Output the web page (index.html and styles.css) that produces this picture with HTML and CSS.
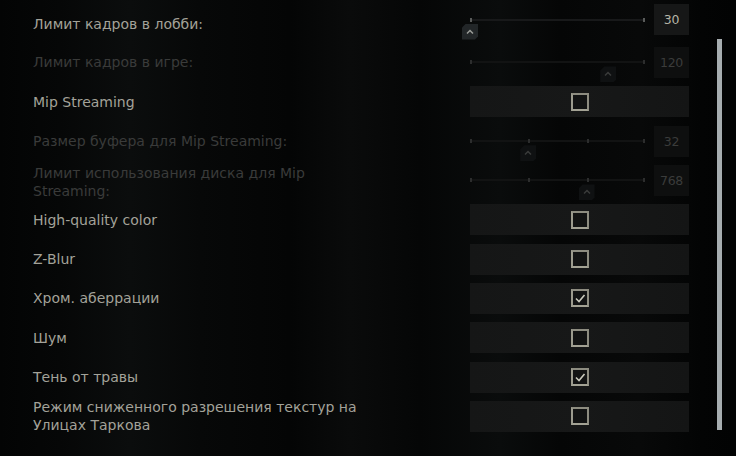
FILE: index.html
```html
<!DOCTYPE html>
<html lang="ru">
<head>
<meta charset="utf-8">
<link rel="stylesheet" href="styles.css">
</head>
<body>
<div class="screen">
  <div class="list">
    <div class="row first">
      <div class="label">Лимит кадров в лобби:</div>
      <div class="control slider-ctl">
        <div class="track">
          <span class="cap l"></span><span class="cap r"></span>
          <span class="handle" style="left:0%"><svg width="16" height="16" viewBox="0 0 16 16"><polyline points="5,9.5 8,6.5 11,9.5" fill="none" stroke="#9a9c98" stroke-width="1.5"/></svg></span>
        </div>
        <div class="value">30</div>
      </div>
    </div>
    <div class="row dim">
      <div class="label">Лимит кадров в игре:</div>
      <div class="control slider-ctl">
        <div class="track">
          <span class="cap l"></span><span class="cap r"></span>
          <span class="handle" style="left:79%"><svg width="16" height="16" viewBox="0 0 16 16"><polyline points="5,9.5 8,6.5 11,9.5" fill="none" stroke="#3a3c3b" stroke-width="1.5"/></svg></span>
        </div>
        <div class="value">120</div>
      </div>
    </div>
    <div class="row">
      <div class="label">Mip Streaming</div>
      <div class="control check-ctl"><span class="box"></span></div>
    </div>
    <div class="row dim">
      <div class="label">Размер буфера для Mip Streaming:</div>
      <div class="control slider-ctl">
        <div class="track">
          <span class="cap l"></span><span class="cap t1"></span><span class="cap t2"></span><span class="cap r"></span>
          <span class="handle" style="left:33.3%"><svg width="16" height="16" viewBox="0 0 16 16"><polyline points="5,9.5 8,6.5 11,9.5" fill="none" stroke="#3a3c3b" stroke-width="1.5"/></svg></span>
        </div>
        <div class="value">32</div>
      </div>
    </div>
    <div class="row dim two">
      <div class="label">Лимит использования диска для Mip Streaming:</div>
      <div class="control slider-ctl">
        <div class="track">
          <span class="cap l"></span><span class="cap t1"></span><span class="cap t2"></span><span class="cap r"></span>
          <span class="handle" style="left:66.6%"><svg width="16" height="16" viewBox="0 0 16 16"><polyline points="5,9.5 8,6.5 11,9.5" fill="none" stroke="#3a3c3b" stroke-width="1.5"/></svg></span>
        </div>
        <div class="value">768</div>
      </div>
    </div>
    <div class="row">
      <div class="label">High-quality color</div>
      <div class="control check-ctl"><span class="box"></span></div>
    </div>
    <div class="row">
      <div class="label">Z-Blur</div>
      <div class="control check-ctl"><span class="box"></span></div>
    </div>
    <div class="row">
      <div class="label">Хром. аберрации</div>
      <div class="control check-ctl"><span class="box"><svg width="14" height="14" viewBox="0 0 14 14"><polyline points="3,7.5 6,10.5 11.5,4" fill="none" stroke="#c9c9bc" stroke-width="1.6"/></svg></span></div>
    </div>
    <div class="row">
      <div class="label">Шум</div>
      <div class="control check-ctl"><span class="box"></span></div>
    </div>
    <div class="row">
      <div class="label">Тень от травы</div>
      <div class="control check-ctl"><span class="box"><svg width="14" height="14" viewBox="0 0 14 14"><polyline points="3,7.5 6,10.5 11.5,4" fill="none" stroke="#c9c9bc" stroke-width="1.6"/></svg></span></div>
    </div>
    <div class="row">
      <div class="label">Режим сниженного разрешения текстур на Улицах Таркова</div>
      <div class="control check-ctl"><span class="box"></span></div>
    </div>
  </div>
  <div class="scroll"><div class="thumb"></div></div>
</div>
</body>
</html>
```

FILE: styles.css
```css
* { box-sizing: border-box; }
html, body { margin: 0; padding: 0; }
body {
  width: 736px;
  height: 456px;
  overflow: hidden;
  background: linear-gradient(to right,
    #030404 0px, #060707 60px, #0b0d0d 130px, #070808 200px, #040505 290px,
    #0a0b0b 350px, #050606 420px, #0a0c0c 500px, #050606 560px,
    #080909 640px, #030404 700px, #020303 736px);
  font-family: "DejaVu Sans", "Liberation Sans", sans-serif;
}
.screen {
  display: flex;
  height: 456px;
}
.list {
  display: flex;
  flex-direction: column;
  gap: 8.33px;
  padding: 4px 0 0 33px;
  width: 689px;
}
.row {
  display: flex;
  align-items: center;
  height: 31px;
}
.row.first { margin-bottom: 3.67px; }
.label {
  flex: 0 0 437px;
  padding-right: 95px;
  font-size: 14px;
  line-height: 18px;
  color: #a3a299;
}
.row.first .label { padding-top: 8px; }
.row.two .label { padding-top: 4px; }
.row.dim .label { color: #3a3b3a; }
.control {
  flex: 0 0 219px;
  height: 31px;
}
.slider-ctl {
  display: flex;
  align-items: center;
  gap: 9px;
}
.track {
  position: relative;
  flex: 0 0 175px;
  height: 2px;
  background: #18191a;
}
.row.dim .track { background: #121313; }
.cap {
  position: absolute;
  top: -1px;
  width: 2px;
  height: 4px;
  background: #595b5a;
}
.row.dim .cap { background: #2c2d2d; }
.cap.l { left: 0; }
.cap.r { right: 0; }
.cap.t1 { left: 33.3%; }
.cap.t2 { left: 66.6%; }
.handle {
  position: absolute;
  top: 5px;
  width: 16px;
  height: 16px;
  margin-left: -8px;
  background: #222628;
  clip-path: polygon(4px 0, 100% 0, 100% calc(100% - 3px), calc(100% - 3px) 100%, 0 100%, 0 4px);
  display: block;
}
.row.dim .handle { background: #0f1112; }
.handle svg { display: block; }
.value {
  flex: 0 0 35px;
  height: 31px;
  display: flex;
  align-items: center;
  justify-content: center;
  background: #161717;
  font-family: "DejaVu Sans", "Liberation Sans", sans-serif;
  font-size: 12.5px;
  letter-spacing: -0.3px;
  color: #b5b4a6;
}
.row.dim .value { background: #0e0f0f; color: #3b3c3b; }
.check-ctl {
  display: flex;
  align-items: center;
  justify-content: center;
  background: linear-gradient(to right, #151616, #171818 50%, #141515);
}
.box {
  width: 18px;
  height: 18px;
  border: 2px solid #8d8c80;
  border-bottom-color: #a3a294;
  border-left-color: #9c9b8e;
  background: #121313;
  display: flex;
  align-items: center;
  justify-content: center;
}
.box svg { display: block; }
.scroll {
  flex: 0 0 auto;
  padding: 39px 0 0 28px;
}
.thumb {
  width: 5px;
  height: 391px;
  background: #a6adb0;
}
```
